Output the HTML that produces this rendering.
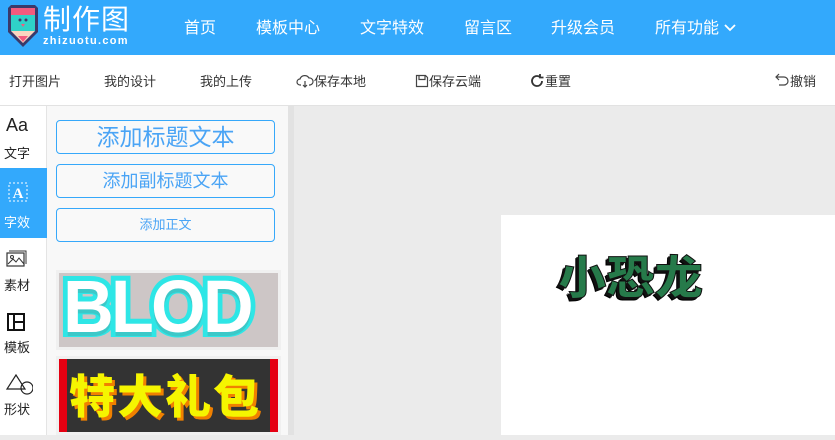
<!DOCTYPE html>
<html><head><meta charset="utf-8"><style>
*{margin:0;padding:0;box-sizing:border-box}
body{width:835px;height:435px;overflow:hidden;position:relative;background:#ebebeb;font-family:"Liberation Sans","Noto Sans CJK SC",sans-serif}
.hd{position:absolute;left:0;top:0;width:835px;height:55px;background:#33a9fc;color:#fff}
.nav{position:absolute;top:14px;font-size:16px;white-space:nowrap}
.tb{position:absolute;left:0;top:55px;width:835px;height:51px;background:#fff;border-bottom:1px solid #e2e2e2;font-size:13px;color:#333}
.tb span{position:absolute;top:16px;white-space:nowrap}
.ln{position:absolute;left:0;top:106px;width:47px;height:329px;background:#fff;border-right:1px solid #e4e4e4}
.it{position:absolute;left:0;width:47px;height:70px;font-size:13px;color:#222}
.it .t{position:absolute;left:4px;top:36px}
.pn{position:absolute;left:47px;top:106px;width:241px;height:329px;background:#f8f8f8}
.sb{position:absolute;left:288px;top:106px;width:6px;height:329px;background:#e2e2e2}
.bt{position:absolute;left:9px;width:219px;border:1px solid #36a8fa;border-radius:4px;color:#4aa4f5;text-align:center;background:#f9f9f9}
</style></head><body>
<div class="hd">
<svg style="position:absolute;left:7px;top:3px" width="32" height="45" viewBox="0 0 32 45">
<path d="M4 2h24l3 3v24l-15 15L1 29V5z" fill="#3a3a6a"/>
<rect x="4" y="5" width="24" height="7" fill="#f45b7e"/>
<rect x="4" y="12" width="24" height="16" fill="#2fd2c8"/>
<path d="M4 28h24L16 40z" fill="#fbd6c0"/>
<path d="M11 33h10l-5 6z" fill="#f45b7e"/>
<circle cx="13" cy="17" r="1.5" fill="#3a3a6a"/><circle cx="19" cy="17" r="1.5" fill="#3a3a6a"/>
<path d="M14 21h4l-2 3z" fill="#f45b7e"/>
</svg>
<div style="position:absolute;left:43px;top:4px;font-size:28px;line-height:32px;letter-spacing:1px">制作图</div>
<div style="position:absolute;left:43px;top:35px;font-size:11px;letter-spacing:1.3px;font-weight:bold">zhizuotu.com</div>
<div class="nav" style="left:184px">首页</div>
<div class="nav" style="left:256px">模板中心</div>
<div class="nav" style="left:360px">文字特效</div>
<div class="nav" style="left:464px">留言区</div>
<div class="nav" style="left:551px">升级会员</div>
<div class="nav" style="left:655px">所有功能 <svg width="14" height="10" viewBox="0 0 14 10"><path d="M2 2l5 5 5-5" stroke="#fff" stroke-width="1.8" fill="none"/></svg></div>
</div>
<div class="tb">
<span style="left:9px">打开图片</span>
<span style="left:104px">我的设计</span>
<span style="left:200px">我的上传</span>
<span style="left:296px"><svg width="18" height="14" viewBox="0 0 18 14" style="vertical-align:-2px"><path d="M5 11H4a3 3 0 010-6 5 5 0 019-1 3.5 3.5 0 011 7h-1M9 7v6M7 11l2 2 2-2" stroke="#444" stroke-width="1.2" fill="none"/></svg>保存本地</span>
<span style="left:415px"><svg width="14" height="14" viewBox="0 0 14 14" style="vertical-align:-2px"><path d="M1.5 1.5h9l2 2v9h-11z M4 1.5v4h6v-4" stroke="#444" stroke-width="1.2" fill="none"/></svg>保存云端</span>
<span style="left:529px"><svg width="16" height="16" viewBox="0 0 16 16" style="vertical-align:-3px"><path d="M13 8a5 5 0 11-2-4M11 1v3.5h3.5M3 8" stroke="#333" stroke-width="1.8" fill="none"/></svg>重置</span>
<span style="left:775px"><svg width="15" height="13" viewBox="0 0 15 13" style="vertical-align:0"><path d="M4 1L1 4l3 3M1 4h8a4 4 0 010 8H4" stroke="#444" stroke-width="1.2" fill="none"/></svg>撤销</span>
</div>
<div class="ln">
<div class="it" style="top:0"><div style="position:absolute;left:6px;top:9px;font-size:18px">Aa</div><div class="t" style="top:37px">文字</div></div>
<div class="it" style="top:62px;background:#33a9fc;color:#fff"><svg style="position:absolute;left:8px;top:14px" width="20" height="20" viewBox="0 0 20 20"><rect x="1" y="1" width="18" height="18" fill="none" stroke="#fff" stroke-dasharray="2 2"/><text x="10" y="16" font-size="15" font-weight="bold" fill="#fff" text-anchor="middle" font-family="Liberation Serif">A</text></svg><div class="t" style="top:44px">字效</div></div>
<div class="it" style="top:140px"><svg style="position:absolute;left:6px;top:4px" width="22" height="18" viewBox="0 0 22 18"><rect x="1" y="3" width="17" height="13" fill="none" stroke="#333" stroke-width="1.2"/><path d="M3 1h17v13" fill="none" stroke="#333" stroke-width="1"/><path d="M2 14l5-5 3 3 3-4 5 6" fill="none" stroke="#333"/><circle cx="6" cy="7" r="1.5" fill="none" stroke="#333"/></svg><div class="t" style="top:29px">素材</div></div>
<div class="it" style="top:202px"><svg style="position:absolute;left:7px;top:5px" width="18" height="18" viewBox="0 0 18 18"><rect x="1" y="1" width="16" height="16" fill="none" stroke="#111" stroke-width="2"/><path d="M7 1v16M7 9h10" stroke="#111" stroke-width="2"/></svg><div class="t" style="top:29px">模板</div></div>
<div class="it" style="top:264px"><svg style="position:absolute;left:5px;top:3px" width="28" height="22" viewBox="0 0 28 22"><path d="M11 2L2 16h18z" fill="none" stroke="#222" stroke-width="1.2"/><circle cx="22" cy="15" r="6" fill="none" stroke="#222" stroke-width="1.2"/></svg><div class="t" style="top:29px">形状</div></div>
</div>
<div class="pn">
<div class="bt" style="top:14px;height:34px;font-size:23px;line-height:32px">添加标题文本</div>
<div class="bt" style="top:58px;height:34px;font-size:18px;line-height:32px">添加副标题文本</div>
<div class="bt" style="top:102px;height:34px;font-size:13px;line-height:32px">添加正文</div>
<div style="position:absolute;left:9px;top:164px;width:225px;height:80px;background:#f0f0f0;padding:3px">
<div style="width:100%;height:100%;background:#cdc6c6;position:relative;overflow:hidden"><div style="position:absolute;left:4px;top:-9px;font-size:74px;font-weight:900;color:#fff;font-family:'Liberation Sans',sans-serif;-webkit-text-stroke:10px #2ee6e6;paint-order:stroke;letter-spacing:-3px;text-shadow:0 4px 0 #3cc8c8;transform:scaleX(0.95);transform-origin:left">BLOD</div></div></div>
<div style="position:absolute;left:9px;top:250px;width:225px;height:79px;background:#f0f0f0;padding:3px">
<div style="width:100%;height:100%;background:#333;border-left:8px solid #e50012;border-right:8px solid #e50012;position:relative;overflow:hidden"><div style="position:absolute;left:2px;top:5px;font-size:46px;font-weight:900;color:#f5f500;letter-spacing:2px;text-shadow:3px 3px 0 #f08000;font-family:'Noto Sans CJK SC',sans-serif;line-height:60px">特大礼包</div></div></div>
</div>
<div class="sb"></div>
<div style="position:absolute;left:501px;top:215px;width:334px;height:220px;background:#fff">
<div style="position:absolute;left:57px;top:30px;font-size:46px;font-weight:900;color:#267a4a;font-family:'Noto Sans CJK SC',sans-serif;line-height:60px;letter-spacing:0;text-shadow:-2px 2px 0 #111,-3px 3px 0 #000;-webkit-text-stroke:1px #111;transform:scaleX(1.05);transform-origin:left">小恐龙</div>
</div>
</body></html>
